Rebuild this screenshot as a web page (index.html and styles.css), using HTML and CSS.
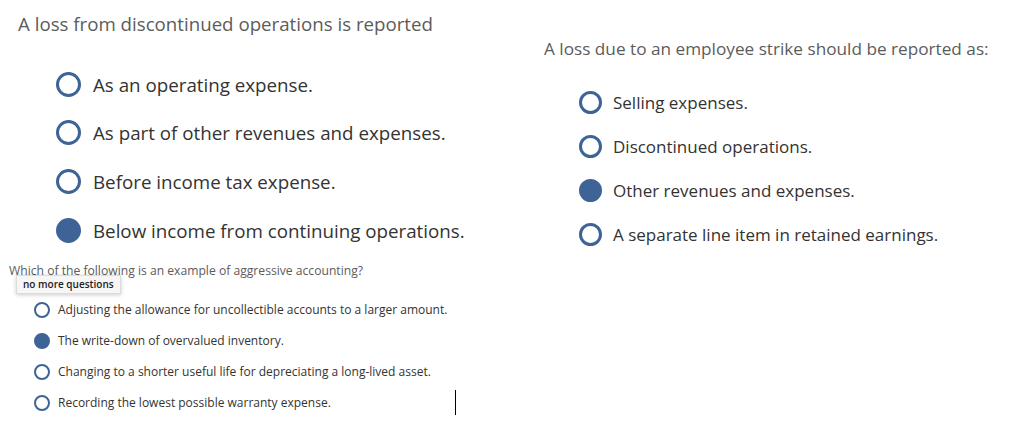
FILE: index.html
```html
<!DOCTYPE html>
<html lang="en">
<head>
<meta charset="utf-8">
<title>Quiz questions</title>
<link rel="stylesheet" href="styles.css">
</head>
<body>
<div class="page">
  <div class="col-left">
    <section class="q q-large">
      <h2 class="q-title">A loss from discontinued operations is reported</h2>
      <ul class="opts">
        <li class="opt"><span class="radio"></span><span class="label">As an operating expense.</span></li>
        <li class="opt"><span class="radio"></span><span class="label">As part of other revenues and expenses.</span></li>
        <li class="opt"><span class="radio"></span><span class="label">Before income tax expense.</span></li>
        <li class="opt"><span class="radio checked"></span><span class="label">Below income from continuing operations.</span></li>
      </ul>
    </section>
    <section class="q q-small">
      <h2 class="q-title">Which of the following is an example of aggressive accounting?</h2>
      <div class="tooltip">no more questions</div>
      <ul class="opts">
        <li class="opt"><span class="radio"></span><span class="label">Adjusting the allowance for uncollectible accounts to a larger amount.</span></li>
        <li class="opt"><span class="radio checked"></span><span class="label">The write-down of overvalued inventory.</span></li>
        <li class="opt"><span class="radio"></span><span class="label">Changing to a shorter useful life for depreciating a long-lived asset.</span></li>
        <li class="opt"><span class="radio"></span><span class="label">Recording the lowest possible warranty expense.</span><span class="cursor"></span></li>
      </ul>
    </section>
  </div>
  <div class="col-right">
    <section class="q q-medium">
      <h2 class="q-title">A loss due to an employee strike should be reported as:</h2>
      <ul class="opts">
        <li class="opt"><span class="radio"></span><span class="label">Selling expenses.</span></li>
        <li class="opt"><span class="radio"></span><span class="label">Discontinued operations.</span></li>
        <li class="opt"><span class="radio checked"></span><span class="label">Other revenues and expenses.</span></li>
        <li class="opt"><span class="radio"></span><span class="label">A separate line item in retained earnings.</span></li>
      </ul>
    </section>
  </div>
</div>
</body>
</html>
```

FILE: styles.css
```css
* { box-sizing: border-box; }
html, body { margin: 0; padding: 0; background: #ffffff; }
body {
  width: 1024px;
  height: 430px;
  overflow: hidden;
  font-family: "Open Sans", Lato, sans-serif;
}
.page { display: flex; }
.col-left { width: 544px; }
.col-right { flex: 1; }

.q-title { margin: 0; font-weight: 400; color: #5c5c5c; white-space: nowrap; }
.opts { list-style: none; margin: 0; padding: 0; }
.opt { display: flex; align-items: center; color: #333333; white-space: nowrap; position: relative; }
.radio { flex: none; border-radius: 50%; border-style: solid; border-color: #3e6397; background: #fff; }
.radio.checked { background: #3e6397; }

/* Large question (top left) */
.q-large { padding: 12px 0 0 18px; height: 255px; }
.q-large .q-title { font-size: 18.7px; line-height: 24px; }
.q-large .opts { padding: 24px 0 0 38px; }
.q-large .opt { height: 48.67px; font-size: 18.75px; gap: 12px; }
.q-large .radio { width: 25px; height: 25px; border-width: 3.5px; }

/* Medium question (right) */
.q-medium { padding: 39px 0 0 0; }
.q-medium .q-title { font-size: 17.2px; line-height: 20px; }
.q-medium .opts { padding: 22px 0 0 35px; }
.q-medium .opt { height: 43.8px; font-size: 17px; gap: 11px; }
.q-medium .radio { width: 23px; height: 23px; border-width: 3px; }

/* Small question (bottom left) */
.q-small { position: relative; padding: 8px 0 0 9px; }
.q-small .q-title { font-size: 12.15px; line-height: 16px; }
.q-small .opts { padding: 15px 0 0 25px; }
.q-small .opt { height: 31px; font-size: 12px; gap: 8px; }
.q-small .radio { width: 16px; height: 16px; border-width: 2px; }

.tooltip {
  position: absolute;
  left: 16px;
  top: 20px;
  padding: 1px 6px 2px;
  font-size: 10px;
  font-weight: 600;
  line-height: 14px;
  color: #222;
  background: #f6f6f6;
  border: 1px solid #dcdcdc;
  box-shadow: 0 1px 4px rgba(0,0,0,0.2);
}
.cursor {
  position: absolute;
  left: 421px;
  top: 3px;
  width: 1px;
  height: 25px;
  background: #000;
}
```
